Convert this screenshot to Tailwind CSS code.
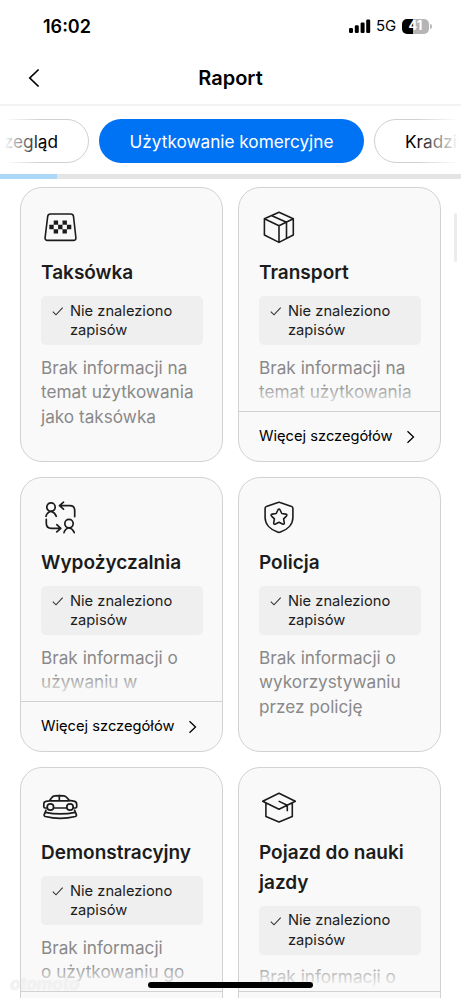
<!DOCTYPE html>
<html lang="pl">
<head>
<meta charset="utf-8">
<meta name="viewport" content="width=device-width, initial-scale=1">
<title>Raport</title>
<script src="https://cdn.jsdelivr.net/npm/@tailwindcss/browser@4"></script>
</head>
<body class="bg-white">
<div class="relative flex h-[998px] w-[461px] flex-col overflow-hidden bg-white font-['Inter',sans-serif] text-[#1c1c1c]">

  <!-- Status bar -->
  <div class="flex h-[52px] shrink-0 items-center justify-between pl-[43px] pr-[29px] text-black">
    <span class="text-[18px] font-semibold">16:02</span>
    <div class="flex items-center">
      <svg class="h-[14px] w-[22px]" viewBox="0 0 22 14"><g fill="#000"><rect x="0" y="9" width="4" height="5" rx="1.2"/><rect x="5.8" y="6.3" width="4" height="7.7" rx="1.2"/><rect x="11.6" y="3.5" width="4" height="10.5" rx="1.2"/><rect x="17.2" y="0.5" width="4" height="13.5" rx="1.2"/></g></svg>
      <span class="ml-[5px] w-[26px] text-[15px]">5G</span>
      <div class="flex h-[15px] w-[27px] items-center justify-center rounded-[5px] bg-[linear-gradient(90deg,#000_41%,#b5b5b5_41%)] text-[13px] font-bold text-white">41</div>
      <div class="ml-px h-[5px] w-[2px] rounded-r-full bg-[#b9b9b9]"></div>
    </div>
  </div>

  <!-- Title bar -->
  <header class="grid h-[54px] shrink-0 grid-cols-[60px_1fr_60px] items-center border-b-2 border-[#f3f3f3] text-black">
    <svg class="ml-[27px] h-[20px] w-[14px]" viewBox="0 0 14 20" fill="none" stroke="#000" stroke-width="1.7"><path d="M11.6 1.5 2.8 10l8.8 8.5"/></svg>
    <h1 class="text-center text-[20px] font-semibold leading-[24px]">Raport</h1>
  </header>

  <!-- Tabs -->
  <nav class="relative flex h-[68px] shrink-0 gap-[10px] overflow-hidden pt-[13px] text-[17.2px] text-black">
    <div class="-ml-[50px] flex h-[44px] w-[139px] shrink-0 items-center justify-end rounded-full border border-[#d0d0d0] pr-[30px] pt-[2px]">Przegląd</div>
    <div class="flex h-[44px] w-[265px] shrink-0 items-center justify-center rounded-full bg-[#0073f5] pt-[2px] text-white">Użytkowanie komercyjne</div>
    <div class="flex h-[44px] w-[140px] shrink-0 items-center rounded-full border border-[#d0d0d0] pl-[30px] pt-[2px]">Kradzież</div>
    <div class="absolute inset-y-0 left-0 w-[42px] bg-linear-to-r from-white from-10% to-white/0"></div>
    <div class="absolute inset-y-0 right-0 w-[45px] bg-linear-to-l from-white from-5% to-white/0"></div>
  </nav>
  <div class="h-[5px] shrink-0 bg-[#e4e4e4]"><div class="h-full w-[57px] bg-[#abd7f8]"></div></div>

  <!-- Cards -->
  <main class="grid shrink-0 grid-cols-[203px_203px] gap-x-[15px] gap-y-[15px] px-[20px] pt-[8px]">

    <section class="flex h-[275px] flex-col overflow-hidden rounded-[22px] border border-[#d2d2d2] bg-[#f9f9f9]">
      <div class="flex-1 overflow-hidden px-[20px] pt-[19px]">
        <svg class="-ml-px h-[40px] w-[40px]" viewBox="0 0 40 40" fill="none" stroke="#1c1c1c" stroke-width="1.6"><path d="M10.4 7h20.4q2.4 0 2.7 2.3l2.4 21.4q.2 2.7-2.5 2.7H7.6q-2.7 0-2.5-2.7L7.7 9.3Q8 7 10.4 7Z"/><path d="M13.7 13.4h4.4v4.4h-4.4zM22.5 13.4h4.4v4.4h-4.4zM9.3 17.8h4.4v4.4H9.3zM18.1 17.8h4.4v4.4h-4.4zM26.9 17.8h4.4v4.4h-4.4zM13.7 22.2h4.4v4.4h-4.4zM22.5 22.2h4.4v4.4h-4.4z" fill="#1c1c1c" stroke="none"/></svg>
        <h2 class="mt-[11px] text-[19px] font-semibold leading-[29.5px]">Taksówka</h2>
        <div class="mt-[8.5px] flex h-[49px] w-[162px] rounded-[5px] bg-[#efefef] pl-[11px] pt-[5.5px]">
          <svg class="mt-[3.5px] h-[12px] w-[12px]" viewBox="0 0 12 12" fill="none" stroke="#333" stroke-width="1.1"><path d="M.8 6.6 4 9.8l6.7-7.2"/></svg>
          <p class="ml-[6px] w-[125px] text-[14.7px] leading-[19.5px]">Nie znaleziono zapisów</p>
        </div>
        <p class="mt-[10.5px] whitespace-nowrap text-[17.2px] leading-[24.6px] text-[#898989]">Brak informacji na<br>temat użytkowania<br>jako taksówka</p>
      </div>
    </section>

    <section class="flex h-[275px] flex-col overflow-hidden rounded-[22px] border border-[#d2d2d2] bg-[#f9f9f9]">
      <div class="relative h-[223px] overflow-hidden px-[20px] pt-[19px]">
        <svg class="-ml-px h-[40px] w-[40px]" viewBox="0 0 40 40" fill="none" stroke="#1c1c1c" stroke-width="1.6" stroke-linejoin="round"><path d="m21 5.3 14.3 6.4V28L21 35.4 6.4 28V11.7zM6.4 11.7 21 18.7l14.3-7M21 18.7v16.7M13.3 8.4l15.2 6.9v16.2"/></svg>
        <h2 class="mt-[11px] text-[19px] font-semibold leading-[29.5px]">Transport</h2>
        <div class="mt-[8.5px] flex h-[49px] w-[162px] rounded-[5px] bg-[#efefef] pl-[11px] pt-[5.5px]">
          <svg class="mt-[3.5px] h-[12px] w-[12px]" viewBox="0 0 12 12" fill="none" stroke="#333" stroke-width="1.1"><path d="M.8 6.6 4 9.8l6.7-7.2"/></svg>
          <p class="ml-[6px] w-[125px] text-[14.7px] leading-[19.5px]">Nie znaleziono zapisów</p>
        </div>
        <p class="mt-[10.5px] whitespace-nowrap text-[17.2px] leading-[24.6px] text-[#898989]">Brak informacji na<br>temat użytkowania</p>
        <div class="absolute inset-x-0 bottom-0 h-[28px] bg-linear-to-t from-[#f9f9f9] from-10% to-[#f9f9f9]/0"></div>
      </div>
      <div class="flex flex-1 items-center justify-between border-t border-[#d2d2d2] pl-[20px] pr-[24px] text-[14.7px] text-black"><span>Więcej szczegółów</span><svg class="h-[14px] w-[12px]" viewBox="0 0 12 14" fill="none" stroke="#000" stroke-width="1.3"><path d="m3.5 1.2 6 5.8-6 5.8"/></svg></div>
    </section>

    <section class="flex h-[275px] flex-col overflow-hidden rounded-[22px] border border-[#d2d2d2] bg-[#f9f9f9]">
      <div class="relative h-[223px] overflow-hidden px-[20px] pt-[19px]">
        <svg class="-ml-px h-[40px] w-[40px]" viewBox="0 0 40 40" fill="none" stroke="#1c1c1c" stroke-width="1.7" stroke-linecap="round" stroke-linejoin="round"><circle cx="11" cy="10.1" r="4.2"/><path d="M6 19.3q1-3.8 5-5 4 1.2 5.2 5M23.5 5.2l-4 3.5 4 3.5M19.6 8.7h10.2q4.9 0 4.9 4.9v6M6.3 22.3v4q0 5 5 5h9.2M16.8 27.7l4 3.6-4 3.6"/><circle cx="29" cy="26.6" r="4.2"/><path d="M24 35.6q1-3.8 5-4.8 4 1 5.2 4.8"/></svg>
        <h2 class="mt-[11px] text-[19px] font-semibold leading-[29.5px]">Wypożyczalnia</h2>
        <div class="mt-[8.5px] flex h-[49px] w-[162px] rounded-[5px] bg-[#efefef] pl-[11px] pt-[5.5px]">
          <svg class="mt-[3.5px] h-[12px] w-[12px]" viewBox="0 0 12 12" fill="none" stroke="#333" stroke-width="1.1"><path d="M.8 6.6 4 9.8l6.7-7.2"/></svg>
          <p class="ml-[6px] w-[125px] text-[14.7px] leading-[19.5px]">Nie znaleziono zapisów</p>
        </div>
        <p class="mt-[10.5px] whitespace-nowrap text-[17.2px] leading-[24.6px] text-[#898989]">Brak informacji o<br>używaniu w</p>
        <div class="absolute inset-x-0 bottom-0 h-[28px] bg-linear-to-t from-[#f9f9f9] from-10% to-[#f9f9f9]/0"></div>
      </div>
      <div class="flex flex-1 items-center justify-between border-t border-[#d2d2d2] pl-[20px] pr-[24px] text-[14.7px] text-black"><span>Więcej szczegółów</span><svg class="h-[14px] w-[12px]" viewBox="0 0 12 14" fill="none" stroke="#000" stroke-width="1.3"><path d="m3.5 1.2 6 5.8-6 5.8"/></svg></div>
    </section>

    <section class="flex h-[275px] flex-col overflow-hidden rounded-[22px] border border-[#d2d2d2] bg-[#f9f9f9]">
      <div class="flex-1 overflow-hidden px-[20px] pt-[19px]">
        <svg class="-ml-px h-[40px] w-[40px]" viewBox="0 0 40 40" fill="none" stroke="#1c1c1c" stroke-width="1.6" stroke-linejoin="round"><path d="M20 5.5q1-.5 2 0l11.6 3.9q1.3.4 1.3 1.8v9.3c0 7-5.6 12.2-12.4 14.6q-1.5.5-3 0C12.7 32.7 7.1 27.5 7.1 20.5v-9.3q0-1.4 1.3-1.8z"/><path d="M19.9 13q1.1-1.9 2.2 0l1.7 3.5 3.9.6q2 .5.7 2l-2.8 2.8.7 3.9q.1 2-1.8 1.2L21 25.2 17.5 27q-1.9.8-1.8-1.2l.7-3.9-2.8-2.8q-1.3-1.5.7-2l3.9-.6z"/></svg>
        <h2 class="mt-[11px] text-[19px] font-semibold leading-[29.5px]">Policja</h2>
        <div class="mt-[8.5px] flex h-[49px] w-[162px] rounded-[5px] bg-[#efefef] pl-[11px] pt-[5.5px]">
          <svg class="mt-[3.5px] h-[12px] w-[12px]" viewBox="0 0 12 12" fill="none" stroke="#333" stroke-width="1.1"><path d="M.8 6.6 4 9.8l6.7-7.2"/></svg>
          <p class="ml-[6px] w-[125px] text-[14.7px] leading-[19.5px]">Nie znaleziono zapisów</p>
        </div>
        <p class="mt-[10.5px] whitespace-nowrap text-[17.2px] leading-[24.6px] text-[#898989]">Brak informacji o<br>wykorzystywaniu<br>przez policję</p>
      </div>
    </section>

    <section class="flex h-[275px] flex-col overflow-hidden rounded-[22px] border border-[#d2d2d2] bg-[#f9f9f9]">
      <div class="relative h-[223px] overflow-hidden px-[20px] pt-[19px]">
        <svg class="-ml-px h-[40px] w-[40px]" viewBox="0 0 40 40" fill="none" stroke="#1c1c1c" stroke-width="1.7" stroke-linecap="round" stroke-linejoin="round"><path d="M7 21H5q-1.2 0-1.2-1.3V17q0-2.2 2.2-2.6l3.4-.6 2.5-3.3q1-1.4 2.8-1.6 4.6-.7 9.3 0 1.7.3 2.8 1.6l2.5 2.9 4.500.8q2.900.6 2.900 3v2.500q0 1.300-1.300 1.300h-1.900M13.800 21h12.700M9.400 13.800h20M19.300 8.700v5.100"/><circle cx="10.4" cy="20" r="3.2"/><circle cx="30" cy="20" r="3.2"/><path d="M6 23.2 4.3 27.4q-.6 1.5 1 2.1Q20.300 33.200 35.300 29.500q1.600-.6 1-2.100L34.600 23.200M5.400 25.300q15 3.300 29.900 0"/></svg>
        <h2 class="mt-[11px] text-[19px] font-semibold leading-[29.5px]">Demonstracyjny</h2>
        <div class="mt-[8.5px] flex h-[49px] w-[162px] rounded-[5px] bg-[#efefef] pl-[11px] pt-[5.5px]">
          <svg class="mt-[3.5px] h-[12px] w-[12px]" viewBox="0 0 12 12" fill="none" stroke="#333" stroke-width="1.1"><path d="M.8 6.6 4 9.8l6.7-7.2"/></svg>
          <p class="ml-[6px] w-[125px] text-[14.7px] leading-[19.5px]">Nie znaleziono zapisów</p>
        </div>
        <p class="mt-[10.5px] whitespace-nowrap text-[17.2px] leading-[24.6px] text-[#898989]">Brak informacji<br>o użytkowaniu go</p>
        <div class="absolute inset-x-0 bottom-0 h-[28px] bg-linear-to-t from-[#f9f9f9] from-10% to-[#f9f9f9]/0"></div>
      </div>
      <div class="flex-1 border-t border-[#d2d2d2]"></div>
    </section>

    <section class="flex h-[275px] flex-col overflow-hidden rounded-[22px] border border-[#d2d2d2] bg-[#f9f9f9]">
      <div class="relative h-[223px] overflow-hidden px-[20px] pt-[19px]">
        <svg class="-ml-px h-[40px] w-[40px]" viewBox="0 0 40 40" fill="none" stroke="#1c1c1c" stroke-width="1.6" stroke-linejoin="round"><path d="m21 6.3 16.3 8L21 22.3l-16.3-8zM7.9 16v13.6L21 35l13.3-5.4V16M20.6 14.1l8.7 4.2v6"/></svg>
        <h2 class="mt-[11px] text-[19px] font-semibold leading-[29.5px]">Pojazd do nauki<br>jazdy</h2>
        <div class="mt-[8.5px] flex h-[49px] w-[162px] rounded-[5px] bg-[#efefef] pl-[11px] pt-[5.5px]">
          <svg class="mt-[3.5px] h-[12px] w-[12px]" viewBox="0 0 12 12" fill="none" stroke="#333" stroke-width="1.1"><path d="M.8 6.6 4 9.8l6.7-7.2"/></svg>
          <p class="ml-[6px] w-[125px] text-[14.7px] leading-[19.5px]">Nie znaleziono zapisów</p>
        </div>
        <p class="mt-[10.5px] whitespace-nowrap text-[17.2px] leading-[24.6px] text-[#898989]">Brak informacji o</p>
        <div class="absolute inset-x-0 bottom-0 h-[30px] bg-linear-to-t from-[#f9f9f9] from-10% to-[#f9f9f9]/0"></div>
      </div>
      <div class="flex-1 border-t border-[#d2d2d2]"></div>
    </section>
  </main>

  <!-- Overlays: scroll thumb, watermark, home indicator -->
  <div class="absolute left-[454px] top-[213px] h-[49px] w-[3px] rounded-full bg-[#ececec]"></div>
  <div class="absolute left-[10px] top-[975px] text-[17px] font-bold italic leading-[18px] text-white/60 [text-shadow:0_0_1px_#ddd]">otomoto</div>
  <div class="absolute left-[148px] top-[982px] h-[6px] w-[165px] rounded-full bg-black"></div>
</div>
</body>
</html>
